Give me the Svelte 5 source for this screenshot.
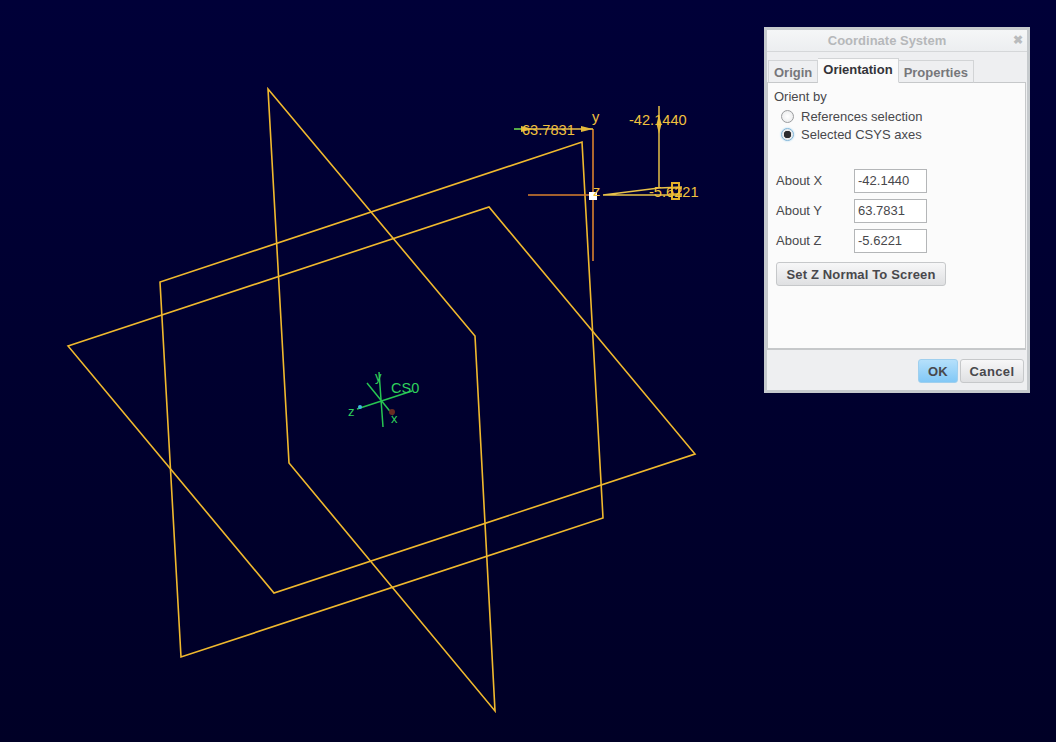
<script lang="ts">
	const planes = [
		'268,89 475,336 495,711 289,463',
		'582,142 603,518 181,657 160,282',
		'68,346 489,207 695,454 274,593'
	];

	const angles = [
		{ label: 'About X', value: '-42.1440' },
		{ label: 'About Y', value: '63.7831' },
		{ label: 'About Z', value: '-5.6221' }
	];

	const tabs = ['Origin', 'Orientation', 'Properties'];
	let activeTab = $state('Orientation');
	let orientBy = $state('axes');
</script>

<main class="viewport">
	<svg class="scene" width="1056" height="742" viewBox="0 0 1056 742">
		<g fill="none" stroke="#f0b92e" stroke-width="1.6">
			{#each planes as points}
				<polygon {points} />
			{/each}
		</g>

		<!-- drag handles -->
		<g fill="none" stroke-width="1.6">
			<path d="M528 195H593M593 129V261" stroke="#d9802e" />
			<path d="M514 129H593" stroke="#e8c24a" />
			<path d="M514 129H524" stroke="#3fae4a" />
			<path d="M659 106V188" stroke="#d8b446" />
			<path d="M603 195H682M603 195L659 188L682 187" stroke="#e8c24a" />
		</g>
		<g fill="#e3b93c">
			<path d="M581 126L593 129L581 132Z" />
			<path d="M521 126L534 129L521 132Z" />
			<path d="M659 115L661.5 124L659 134L656.5 124Z" />
		</g>
		<rect x="672" y="183" width="7" height="16" fill="none" stroke="#e3b028" stroke-width="2" />
		<path d="M669 188H682M669 194H682" stroke="#e3b028" stroke-width="1.5" />
		<rect x="589" y="192" width="8" height="8" fill="#fff" />

		<g class="dim" fill="#f2c23e">
			<text x="522" y="135">63.7831</text>
			<text x="592" y="122">y</text>
			<text x="593" y="196">z</text>
			<text x="629" y="125">-42.1440</text>
			<text x="649" y="197">-5.6221</text>
		</g>

		<!-- CS0 triad -->
		<g stroke="#27c552" stroke-width="1.5" fill="none">
			<path d="M379 372L383 427M367 383L393 415M357 409L412 391" />
		</g>
		<circle cx="360" cy="407" r="2" fill="#3fb6e0" />
		<circle cx="392" cy="412" r="3" fill="#6a2a22" />
		<g class="triad" fill="#2fd05c">
			<text x="391" y="393">CS0</text>
			<text x="375" y="381">y</text>
			<text x="348" y="416">z</text>
			<text x="391" y="423">x</text>
		</g>
	</svg>

	<section class="dialog" aria-label="Coordinate System">
		<header class="titlebar">
			<span>Coordinate System</span>
			<span class="close">✖</span>
		</header>

		<div class="tabs">
			{#each tabs as tab}
				<button type="button" class="tab" class:active={activeTab === tab} onclick={() => (activeTab = tab)}>
					{tab}
				</button>
			{/each}
		</div>

		<div class="panel">
			<div class="group-label">Orient by</div>
			<label class="radio">
				<input type="radio" name="orient" value="refs" bind:group={orientBy} />
				<span class="dot"></span>
				References selection
			</label>
			<label class="radio">
				<input type="radio" name="orient" value="axes" bind:group={orientBy} />
				<span class="dot"></span>
				Selected CSYS axes
			</label>

			<div class="angles">
				{#each angles as angle}
					<div class="angle-row">
						<span>{angle.label}</span>
						<input type="text" value={angle.value} />
					</div>
				{/each}
			</div>

			<button type="button" class="btn normal-btn">Set Z Normal To Screen</button>
		</div>

		<footer class="actions">
			<button type="button" class="btn ok">OK</button>
			<button type="button" class="btn cancel">Cancel</button>
		</footer>
	</section>
</main>

<style>
	:global(body) {
		margin: 0;
		overflow: hidden;
	}

	.viewport {
		position: relative;
		width: 1056px;
		height: 742px;
		overflow: hidden;
		background: linear-gradient(#000038, #000026);
		font-family: 'Liberation Sans', Arial, sans-serif;
	}

	.scene {
		display: block;
	}

	.dim text {
		font: 14.6px 'Liberation Sans', Arial, sans-serif;
	}

	.triad text {
		font: 14.5px 'Liberation Sans', Arial, sans-serif;
	}

	.triad text + text {
		font-size: 13px;
	}

	.dialog {
		position: absolute;
		left: 764px;
		top: 27px;
		width: 260px;
		height: 360px;
		border: 3px solid #c6cacd;
		background: #eeeff1;
		display: flex;
		flex-direction: column;
		color: #48484c;
		font-size: 13px;
	}

	.titlebar {
		box-sizing: border-box;
		height: 22px;
		flex: none;
		display: flex;
		align-items: center;
		justify-content: center;
		position: relative;
		padding-right: 20px;
		border-bottom: 1px solid #d5d7d9;
		background: linear-gradient(#f5f6f7, #eceef0);
		color: #b6b8ba;
		font-size: 13px;
		font-weight: 700;
	}

	.close {
		position: absolute;
		right: 4px;
		top: 3px;
		font-size: 12px;
		color: #b9bbbd;
	}

	.tabs {
		display: flex;
		align-items: flex-end;
		height: 31px;
		flex: none;
		padding-left: 1px;
		margin-bottom: -1px;
		position: relative;
	}

	.tab {
		height: 23px;
		padding: 2px 5px 0;
		margin: 0;
		border: 1px solid #d2d4d6;
		border-bottom: 1px solid #c6c8ca;
		background: #eeeff1;
		color: #77777b;
		font: 700 13px 'Liberation Sans', Arial, sans-serif;
	}

	.tab + .tab {
		border-left: 0;
	}

	.tab.active {
		height: 25px;
		padding: 0 5px 2px;
		background: #fbfbfb;
		border-color: #d2d4d6;
		border-bottom-color: #fbfbfb;
		color: #333338;
	}

	.panel {
		flex: 1;
		margin-right: 1px;
		border: 1px solid #c6c8ca;
		border-bottom-width: 2px;
		background: #fbfbfb;
		padding: 6px 0 0 6px;
		display: flex;
		flex-direction: column;
		align-items: flex-start;
	}

	.group-label {
		height: 18px;
		line-height: 15px;
	}

	.radio {
		display: flex;
		align-items: center;
		height: 18px;
		padding-left: 7px;
	}

	.radio input {
		position: absolute;
		opacity: 0;
		width: 0;
		height: 0;
	}

	.dot {
		width: 11px;
		height: 11px;
		margin-right: 7px;
		border: 1px solid #9a9c9e;
		border-radius: 50%;
		background: radial-gradient(#fff, #e6e7e8);
	}

	.radio input:checked + .dot {
		border-color: #7fb4d6;
		box-shadow: 0 0 2px #9fd3f2;
		background: radial-gradient(circle, #2c2c2e 0 3.5px, #e9eaeb 4px);
	}

	.angles {
		margin-top: 25px;
		padding-left: 2px;
		display: flex;
		flex-direction: column;
		gap: 5px;
	}

	.angle-row {
		display: flex;
		align-items: center;
		height: 25px;
	}

	.angle-row span {
		width: 78px;
	}

	.angle-row input {
		box-sizing: border-box;
		width: 73px;
		height: 24px;
		padding: 0 3px;
		border: 1px solid #b4b6b8;
		border-radius: 0;
		background: #fff;
		color: #48484c;
		outline: none;
		font: 13px 'Liberation Sans', Arial, sans-serif;
	}

	.btn {
		border: 1px solid #c6c8ca;
		border-radius: 3px;
		background: linear-gradient(#f7f7f8, #dfe0e2);
		color: #48484c;
		padding: 0;
		font: 700 13px 'Liberation Sans', Arial, sans-serif;
		letter-spacing: 0.15px;
	}

	.normal-btn {
		width: 170px;
		height: 24px;
		margin: 9px 0 0 2px;
	}

	.actions {
		flex: none;
		box-sizing: border-box;
		height: 40px;
		display: flex;
		justify-content: flex-end;
		align-items: center;
		gap: 2px;
		padding: 2px 3px 0 0;
	}

	.ok {
		width: 40px;
		height: 24px;
		background: linear-gradient(#b5e0fb, #82c8f6);
		border-color: #9fcfee;
	}

	.cancel {
		width: 64px;
		height: 24px;
		letter-spacing: 0.4px;
	}
</style>
